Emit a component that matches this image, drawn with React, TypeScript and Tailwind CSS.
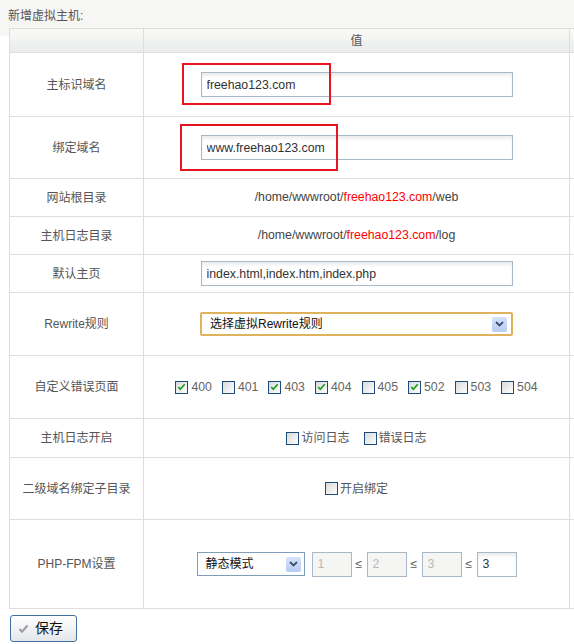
import React from 'react';

const font = 'font-["Liberation_Sans","Noto_Sans_CJK_SC",sans-serif]';

const Chevron = () => (
  <svg width="9" height="6" viewBox="0 0 9 6">
    <polyline points="1,1 4.5,4.5 8,1" fill="none" stroke="#3f4f6f" strokeWidth="1.8" />
  </svg>
);

const ArrowBtn = () => (
  <span className="flex h-[15px] w-[15px] items-center justify-center rounded-[2px] bg-[linear-gradient(to_bottom,#d6e2fb,#b8ccf3)]">
    <Chevron />
  </span>
);

const Check = ({ color = '#1b9a1b', size = 10 }: { color?: string; size?: number }) => (
  <svg width={size + 1} height={size} viewBox="0 0 11 10">
    <path d="M1.5 5 L4 7.8 L9.5 1.5" fill="none" stroke={color} strokeWidth="2" />
  </svg>
);

const Box = ({ checked }: { checked?: boolean }) => (
  <span className="flex h-[13px] w-[13px] shrink-0 items-start justify-start border border-[#1d4c7a] bg-[linear-gradient(135deg,#d9d9d9,#ffffff)] pl-[1px] pt-[1px]">
    {checked && <Check size={8} />}
  </span>
);

const TextInput = ({ value, w = 'w-[312px]' }: { value: string; w?: string }) => (
  <input
    readOnly
    defaultValue={value}
    className={`${w} h-[25px] border border-[#a9b7cb] bg-white px-[5px] text-[12.3px] text-[#333] shadow-[inset_0_3px_3px_rgba(0,0,0,0.07)] outline-none`}
  />
);

const Label = ({ children }: { children: React.ReactNode }) => (
  <td className="border border-[#dedede] text-center text-[#555]">{children}</td>
);

const codes: [string, boolean][] = [
  ['400', true],
  ['401', false],
  ['403', true],
  ['404', true],
  ['405', false],
  ['502', true],
  ['503', false],
  ['504', false],
];

export default function App() {
  return (
    <div className={`${font} h-[644px] w-[574px] overflow-hidden bg-white text-[12px] text-[#555]`}>
      <div className="h-[36px] bg-[#f6f6f4] pl-[8px] pt-[8px] leading-[16px]">新增虚拟主机:</div>
      <div className="-mt-[8px] ml-[9px] w-[620px]">
        <table className="w-[620px] table-fixed border-collapse">
          <colgroup>
            <col className="w-[134px]" />
            <col className="w-[426px]" />
            <col />
          </colgroup>
          <tbody>
            <tr className="h-[24px] bg-[linear-gradient(to_bottom,#f8f8f6_0%,#f4f4f2_45%,#edeff1_55%,#eaecee_100%)]">
              <td className="border border-[#dedede]" />
              <td className="border border-[#dedede] text-center text-[#555]">值</td>
              <td className="border border-[#dedede]" />
            </tr>
            <tr className="h-[64px]">
              <Label>主标识域名</Label>
              <td className="relative border border-[#dedede] text-center">
                <TextInput value="freehao123.com" />
                <span className="absolute left-[38px] top-[10px] h-[42px] w-[149px] border-2 border-[#e8141e]" />
              </td>
              <td className="border border-[#dedede]" />
            </tr>
            <tr className="h-[62px]">
              <Label>绑定域名</Label>
              <td className="relative border border-[#dedede] text-center">
                <TextInput value="www.freehao123.com" />
                <span className="absolute left-[36px] top-[7px] h-[47px] w-[158px] border-2 border-[#e8141e]" />
              </td>
              <td className="border border-[#dedede]" />
            </tr>
            <tr className="h-[38px]">
              <Label>网站根目录</Label>
              <td className="border border-[#dedede] text-center text-[12.3px] text-[#444]">
                /home/wwwroot/<span className="text-[#ff0000]">freehao123.com</span>/web
              </td>
              <td className="border border-[#dedede]" />
            </tr>
            <tr className="h-[38px]">
              <Label>主机日志目录</Label>
              <td className="border border-[#dedede] text-center text-[12.3px] text-[#444]">
                /home/wwwroot/<span className="text-[#ff0000]">freehao123.com</span>/log
              </td>
              <td className="border border-[#dedede]" />
            </tr>
            <tr className="h-[38px]">
              <Label>默认主页</Label>
              <td className="border border-[#dedede] text-center">
                <TextInput value="index.html,index.htm,index.php" />
              </td>
              <td className="border border-[#dedede]" />
            </tr>
            <tr className="h-[63px]">
              <Label>Rewrite规则</Label>
              <td className="border border-[#dedede]">
                <div className="mx-auto flex h-[24px] w-[313px] items-center justify-between rounded-[2px] border-2 border-[#dfb35c] bg-white pl-[8px] pr-[4px] text-[#111]">
                  <span>选择虚拟Rewrite规则</span>
                  <ArrowBtn />
                </div>
              </td>
              <td className="border border-[#dedede]" />
            </tr>
            <tr className="h-[63px]">
              <Label>自定义错误页面</Label>
              <td className="border border-[#dedede]">
                <div className="flex items-center justify-center gap-[10px] text-[12.3px]">
                  {codes.map(([c, on]) => (
                    <span key={c} className="flex items-center gap-[3px] text-[#666]">
                      <Box checked={on} />
                      {c}
                    </span>
                  ))}
                </div>
              </td>
              <td className="border border-[#dedede]" />
            </tr>
            <tr className="h-[39px]">
              <Label>主机日志开启</Label>
              <td className="border border-[#dedede]">
                <div className="flex items-center justify-center gap-[14px]">
                  <span className="flex items-center gap-[2px]">
                    <Box />
                    访问日志
                  </span>
                  <span className="flex items-center gap-[2px]">
                    <Box />
                    错误日志
                  </span>
                </div>
              </td>
              <td className="border border-[#dedede]" />
            </tr>
            <tr className="h-[62px]">
              <Label>二级域名绑定子目录</Label>
              <td className="border border-[#dedede]">
                <div className="flex items-center justify-center gap-[2px]">
                  <Box />
                  开启绑定
                </div>
              </td>
              <td className="border border-[#dedede]" />
            </tr>
            <tr className="h-[89px]">
              <Label>PHP-FPM设置</Label>
              <td className="border border-[#dedede]">
                <div className="flex items-center justify-center gap-[4px]">
                  <div className="mr-[3px] flex h-[24px] w-[108px] items-center justify-between border border-[#7f9db9] bg-white pl-[8px] pr-[3px] text-[#111]">
                    <span>静态模式</span>
                    <ArrowBtn />
                  </div>
                  {['1', '2', '3'].map((v) => (
                    <React.Fragment key={v}>
                      <input
                        readOnly
                        disabled
                        defaultValue={v}
                        className="h-[25px] w-[40px] border border-[#a9b7cb] bg-[#f5f5f3] px-[5px] text-[12.3px] text-[#b8b8b8]"
                      />
                      <span className="w-[7px] text-[#555]">≤</span>
                    </React.Fragment>
                  ))}
                  <TextInput value="3" w="w-[40px]" />
                </div>
              </td>
              <td className="border border-[#dedede]" />
            </tr>
          </tbody>
        </table>
      </div>
      <div className="pl-[10px] pt-[6px]">
        <button className="flex h-[27px] w-[67px] items-center gap-[6px] rounded-[3px] border border-[#40709f] bg-[linear-gradient(to_bottom,#ffffff,#e4e6ea)] pl-[7px] text-[14px] text-[#111]">
          <Check color="#9a9a9a" />
          保存
        </button>
      </div>
    </div>
  );
}
